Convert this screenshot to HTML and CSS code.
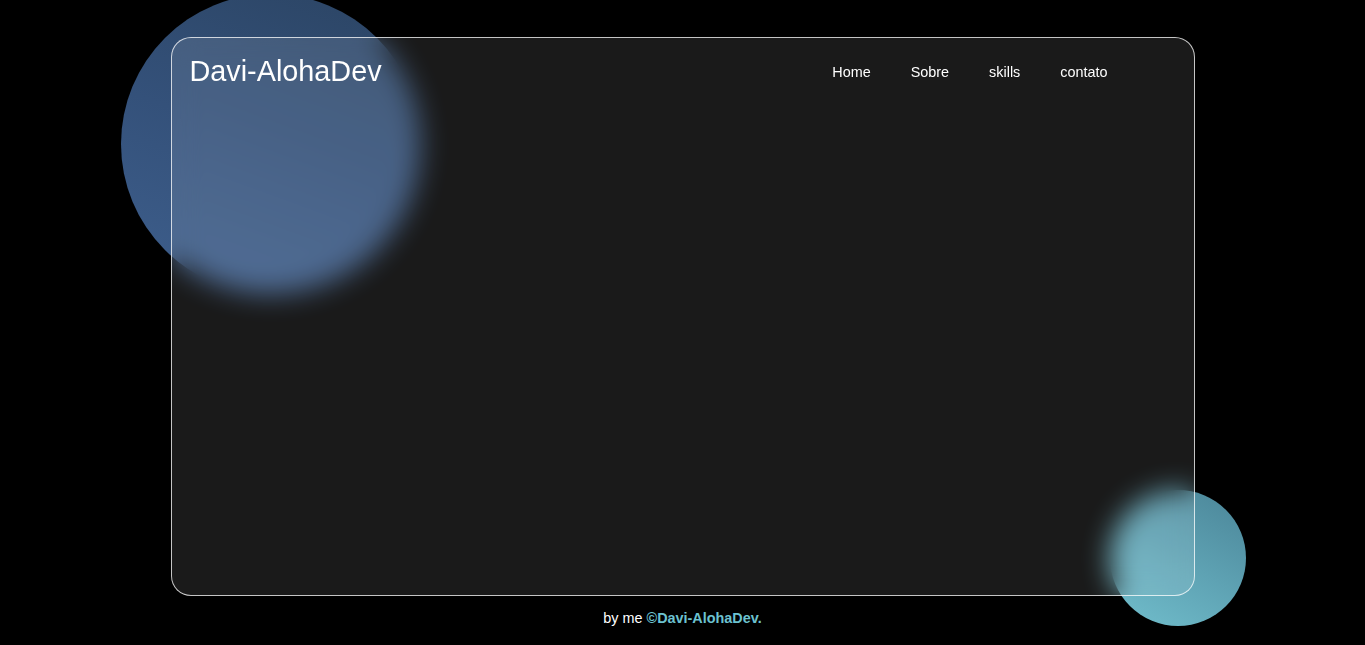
FILE: index.html
```html
<!DOCTYPE html>
<html lang="pt-BR">
<head>
<meta charset="utf-8">
<title>Davi-AlohaDev</title>
<link rel="stylesheet" href="styles.css">
</head>
<body>
<div class="blob blob-blue"></div>
<div class="blob blob-teal"></div>
<main class="card">
  <header class="header">
    <h1 class="logo">Davi-AlohaDev</h1>
    <nav class="nav">
      <a href="#" class="nav-link">Home</a>
      <a href="#" class="nav-link">Sobre</a>
      <a href="#" class="nav-link">skills</a>
      <a href="#" class="nav-link">contato</a>
    </nav>
  </header>
</main>
<footer class="footer">by me <strong class="footer-brand">©Davi-AlohaDev.</strong></footer>
</body>
</html>
```

FILE: styles.css
```css
* { box-sizing: border-box; }
html, body { margin: 0; padding: 0; }
body {
  background: #000;
  font-family: "Liberation Sans", Arial, sans-serif;
  color: #fff;
  min-height: 645px;
  position: relative;
  overflow: hidden;
  padding-top: 37px;
}
.blob {
  position: absolute;
  border-radius: 50%;
  z-index: 0;
}
.blob-blue {
  left: 121px;
  top: -6px;
  width: 300px;
  height: 300px;
  background: linear-gradient(200deg, #2b4463 0%, #34517a 50%, #3e5f8d 100%);
}
.blob-teal {
  left: 1110px;
  top: 490px;
  width: 136px;
  height: 136px;
  background: linear-gradient(210deg, #4a8497 0%, #5ea2b3 50%, #72bfcd 100%);
}
.card {
  position: relative;
  z-index: 1;
  width: 1024px;
  height: 559px;
  margin: 0 auto;
  border: 1px solid rgba(255, 255, 255, 0.75);
  border-radius: 20px;
  background: rgba(255, 255, 255, 0.1);
  backdrop-filter: blur(14px);
  -webkit-backdrop-filter: blur(14px);
}
.header {
  display: flex;
  align-items: center;
  justify-content: space-between;
  height: 66px;
  padding: 0 86px 0 18px;
}
.logo {
  margin: 0;
  font-size: 28.8px;
  font-weight: 400;
  color: #fff;
}
.nav {
  display: flex;
  gap: 40px;
  padding-top: 2px;
}
.nav-link {
  color: #fff;
  text-decoration: none;
  font-size: 14.4px;
}
.footer {
  position: relative;
  z-index: 1;
  text-align: center;
  font-size: 14.4px;
  margin-top: 14px;
  color: #fff;
}
.footer-brand {
  color: #6cc2d0;
}
```
